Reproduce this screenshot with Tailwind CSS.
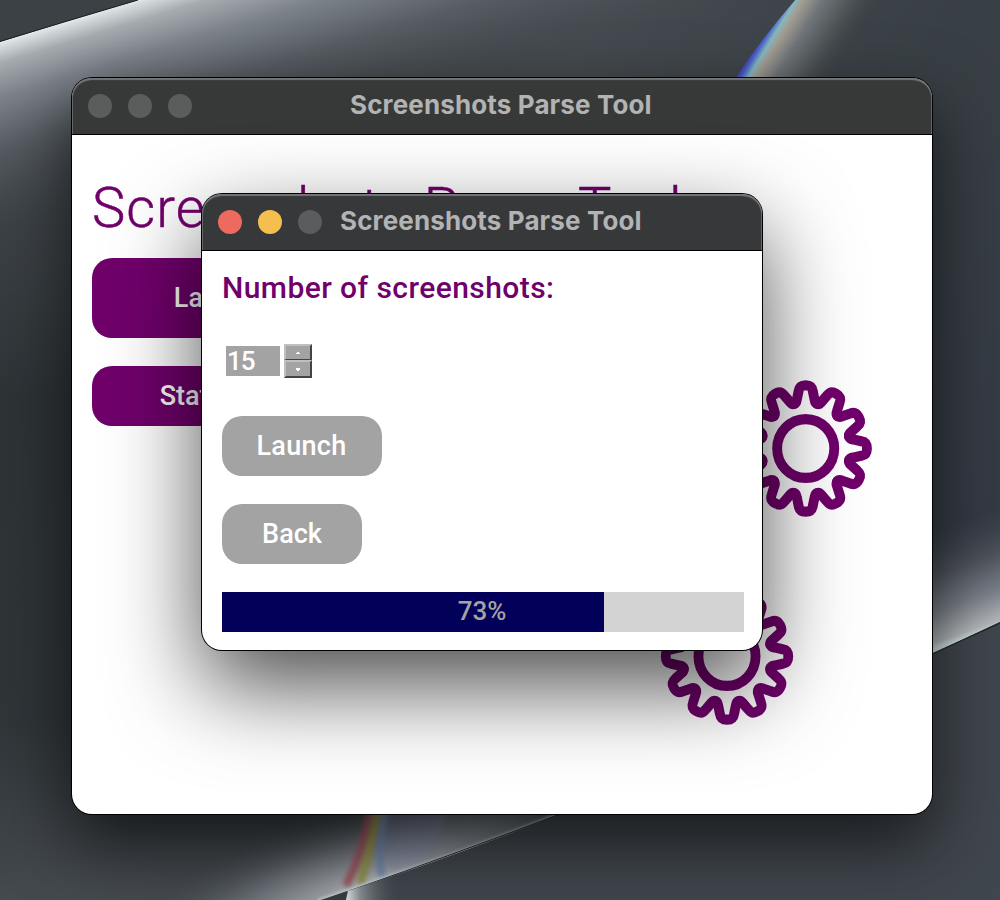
<!DOCTYPE html>
<html lang="en">
<head>
<meta charset="utf-8">
<title>Screenshots Parse Tool</title>
<script src="https://cdn.jsdelivr.net/npm/@tailwindcss/browser@4"></script>
</head>
<body class="relative h-[900px] w-[1000px] overflow-hidden bg-[#34393d] font-['Roboto',sans-serif]">
<svg class="absolute inset-0" width="1000" height="900" viewBox="0 0 1000 900">
  <defs>
    <linearGradient id="base" x1="0" y1="0" x2="1" y2="0.6"><stop offset="0" stop-color="#3e4348"/><stop offset=".45" stop-color="#444a4f"/><stop offset=".7" stop-color="#394045"/><stop offset="1" stop-color="#343a44"/></linearGradient>
    <linearGradient id="left" x1="0" y1="0" x2="0" y2="1"><stop offset="0" stop-color="#2d3336" stop-opacity="0"/><stop offset=".3" stop-color="#2d3336"/><stop offset=".75" stop-color="#2f3538"/><stop offset="1" stop-color="#454a50"/></linearGradient>
    <linearGradient id="arc" gradientUnits="userSpaceOnUse" x1="60" y1="22" x2="114" y2="198"><stop offset="0" stop-color="#e8f2f2"/><stop offset=".03" stop-color="#d6dcde"/><stop offset=".12" stop-color="#a6abb0"/><stop offset=".3" stop-color="#7c828a"/><stop offset=".55" stop-color="#585e64"/><stop offset="1" stop-color="#42484c" stop-opacity="0"/></linearGradient>
    <linearGradient id="rb" gradientUnits="userSpaceOnUse" x1="762" y1="36" x2="832" y2="79"><stop offset="0" stop-color="#4840b0"/><stop offset=".05" stop-color="#4b66cc"/><stop offset=".12" stop-color="#86b8c0"/><stop offset=".2" stop-color="#a39d92"/><stop offset=".4" stop-color="#70757a"/><stop offset=".65" stop-color="#54595c"/><stop offset="1" stop-color="#3e4448" stop-opacity="0"/></linearGradient>
    <linearGradient id="right" gradientUnits="userSpaceOnUse" x1="966" y1="638" x2="930" y2="530"><stop offset="0" stop-color="#d0dede"/><stop offset=".05" stop-color="#b4b8ba"/><stop offset=".3" stop-color="#7b818a"/><stop offset=".6" stop-color="#50555d"/><stop offset="1" stop-color="#40464f" stop-opacity="0"/></linearGradient>
    <radialGradient id="bot" gradientUnits="userSpaceOnUse" cx="0" cy="0" r="1" gradientTransform="translate(370 892) rotate(-20) scale(310 100)"><stop offset="0" stop-color="#c8ccd0"/><stop offset=".2" stop-color="#989ca2"/><stop offset=".5" stop-color="#6a6f76"/><stop offset="1" stop-color="#3a4044" stop-opacity="0"/></radialGradient>
    <linearGradient id="slit" x1="0" y1="0" x2="1" y2="0"><stop offset="0" stop-color="#dce2e4"/><stop offset=".25" stop-color="#8a9096"/><stop offset="1" stop-color="#43494d" stop-opacity="0"/></linearGradient>
    <clipPath id="sweep"><path d="M0 500H1000V622L932 654L560 814Q440 862 320 900H0Z"/></clipPath>
    <filter id="soft" x="-50%" y="-20%" width="200%" height="140%"><feGaussianBlur stdDeviation="2.5"/></filter>
    <filter id="edge"><feGaussianBlur stdDeviation="1.4"/></filter>
  </defs>
  <rect width="1000" height="900" fill="url(#base)"/>
  <rect y="180" width="600" height="720" fill="url(#left)"/>
  <path d="M0 42Q70 20 138 0H760L700 260H0Z" fill="url(#arc)"/>
  <path d="M-2-2H138V0Q70 20-2 42Z" fill="#3b4144" stroke="#1c2022"/>
  <path d="M796-1Q762 38 734 80H900L960-1Z" fill="url(#rb)"/>
  <path d="M900 500H1000V622L932 654H900Z" fill="url(#right)"/>
  <path d="M1000 622L932 654L560 814Q440 860 320 900H1000Z" fill="#40464d"/>
  <g clip-path="url(#sweep)">
    <rect y="700" width="700" height="200" fill="url(#bot)"/>
    <path d="M388 810Q378 850 392 872L430 856L450 810Z" fill="#7c86a8" opacity=".4" filter="url(#soft)"/>
    <g fill="none" stroke-width="8" filter="url(#soft)">
      <path d="M371 806Q364 850 346 886" stroke="#9a5560"/>
      <path d="M379 806Q371 850 360 884" stroke="#90904c"/>
      <path d="M387 806Q377 850 382 876" stroke="#7186a8"/>
    </g>
    <path d="M318 902Q440 862 562 814" fill="none" stroke="#c9d4d5" stroke-width="5" filter="url(#edge)" opacity=".85"/>
  </g>
  <path d="M349 891Q460 852 560 814" fill="none" stroke="#23282b"/>
  <path d="M348 891L400 873V900H346Z" fill="url(#slit)"/>
  <path d="M347 891L323 900H345Z" fill="#383d40"/>
  <path d="M932 654L1000 623" stroke="#20262a" stroke-width="1.2"/>
</svg>

<main class="absolute left-[72px] top-[78px] h-[736px] w-[860px] rounded-[20px] bg-white shadow-[0_0_0_1px_#000,0_28px_70px_rgba(0,0,0,0.65)]">
  <header class="flex h-[57px] items-center rounded-t-[20px] border-b border-black bg-[#373938] pb-px pl-4 shadow-[inset_0_2px_1px_#757776,inset_1px_0_0_#656766,inset_-1px_0_0_#656766]">
    <div class="flex w-[104px] gap-4"><i class="size-6 rounded-full bg-[#5b5d5c]"></i><i class="size-6 rounded-full bg-[#5b5d5c]"></i><i class="size-6 rounded-full bg-[#5b5d5c]"></i></div>
    <b class="ml-[158px] whitespace-nowrap pb-0.5 font-['Inter'] text-[26px] font-bold leading-8 tracking-[0.13px] text-[#b2b3b2]">Screenshots Parse Tool</b>
  </header>
  <section class="flex flex-col items-start px-5 pt-[39px]">
    <h1 class="whitespace-nowrap text-[56px] font-light leading-[68px] text-[#70006b] [-webkit-text-stroke:0.5px_#70006b]"><span class="tracking-[1.1px]">Screenshots</span> <span>Parse</span> <span class="tracking-[-0.8px]">Tool</span></h1>
    <button class="mt-4 h-20 w-[260px] rounded-[20px] bg-[#70006b] pr-[8px] pt-px text-[27px] font-medium text-white">Launch</button>
    <button class="mt-7 h-[60px] w-[260px] rounded-[20px] bg-[#70006b] pr-[11px] pt-px text-[27px] font-medium text-white">Statistics</button>
  </section>
  <svg class="absolute left-[580px] top-[290px]" width="240" height="370" viewBox="652 368 240 370" fill="none" stroke="#70006b" stroke-width="10" stroke-linecap="round" stroke-linejoin="round">
    <defs>
      <path id="tooth" d="M-11.8-43.9C-10-44.4-9.3-46-9-48L-7.2-56.5C-6.4-61.5-4-62.2 0-62.2S6.4-61.5 7.2-56.5L9-48C9.3-46 10-44.4 11.8-43.9"/>
      <g id="gear"><circle r="29"/><use href="#tooth"/><use href="#tooth" transform="rotate(30)"/><use href="#tooth" transform="rotate(60)"/><use href="#tooth" transform="rotate(90)"/><use href="#tooth" transform="rotate(120)"/><use href="#tooth" transform="rotate(150)"/><use href="#tooth" transform="rotate(180)"/><use href="#tooth" transform="rotate(210)"/><use href="#tooth" transform="rotate(240)"/><use href="#tooth" transform="rotate(270)"/><use href="#tooth" transform="rotate(300)"/><use href="#tooth" transform="rotate(330)"/></g>
    </defs>
    <use href="#gear" transform="translate(805.7 448.5) scale(.985 1.015)"/>
    <use href="#gear" transform="translate(727 656.5) scale(.985 1.015)"/>
  </svg>
</main>

<div class="absolute left-[202px] top-[194px] h-[456px] w-[560px] rounded-[20px] bg-white shadow-[0_0_0_1px_#000,0_36px_90px_rgba(0,0,0,0.7)]">
  <header class="flex h-[57px] items-center rounded-t-[20px] border-b border-black bg-[#373839] pb-px pl-4 shadow-[inset_0_2px_1px_#757677,inset_1px_0_0_#656667,inset_-1px_0_0_#656667]">
    <div class="flex w-[104px] gap-4"><i class="size-6 rounded-full bg-[#ed6a5e]"></i><i class="size-6 rounded-full bg-[#f5bf4f]"></i><i class="size-6 rounded-full bg-[#5b5c5e]"></i></div>
    <b class="ml-[18px] whitespace-nowrap pb-0.5 font-['Inter'] text-[26px] font-bold leading-8 tracking-[0.13px] text-[#b2b3b5]">Screenshots Parse Tool</b>
  </header>
  <section class="flex flex-col items-start pl-5 pt-[19px]">
    <h2 class="whitespace-nowrap text-[30px] font-medium leading-9 tracking-[0.43px] text-[#70006b]">Number of screenshots:</h2>
    <div class="mt-[38px] flex h-[34px] items-center gap-1 pl-1">
      <span class="h-[30px] w-[54px] bg-[#a3a3a3] pl-px text-[26px] font-medium leading-[30px] tracking-[-1px] text-white">15</span>
      <div class="flex h-[34px] w-7 flex-col">
        <span class="flex h-4 items-center justify-center border-2 border-b border-[#c0c0c0] border-b-[#444] border-r-[#444] bg-[#a3a3a3]"><svg width="4" height="2"><path d="M1 0h2v1h1v1H0V1h1z" fill="#fff"/></svg></span>
        <span class="flex h-[18px] items-center justify-center border-2 border-[#c0c0c0] border-b-[#444] border-r-[#444] bg-[#a3a3a3]"><svg width="4" height="3"><path d="M0 0h4v2H3v1H1V2H0z" fill="#fff"/></svg></span>
      </div>
    </div>
    <button class="mt-[38px] h-[60px] w-40 rounded-[20px] bg-[#a3a3a3] pr-px pt-px text-[27px] font-medium tracking-[0.3px] text-white">Launch</button>
    <button class="mt-7 h-[60px] w-[140px] rounded-[20px] bg-[#a3a3a3] pt-px text-[27px] font-medium text-white">Back</button>
    <div class="mt-7 grid h-10 w-[522px] bg-[#d3d3d3]">
      <div class="col-start-1 row-start-1 bg-[#030059]" style="width:73.2%"></div>
      <span class="col-start-1 row-start-1 -mt-0.5 self-center pr-0.5 text-center text-[26px] font-medium leading-[38px] text-[#a3a3a3]">73%</span>
    </div>
  </section>
</div>
</body>
</html>
